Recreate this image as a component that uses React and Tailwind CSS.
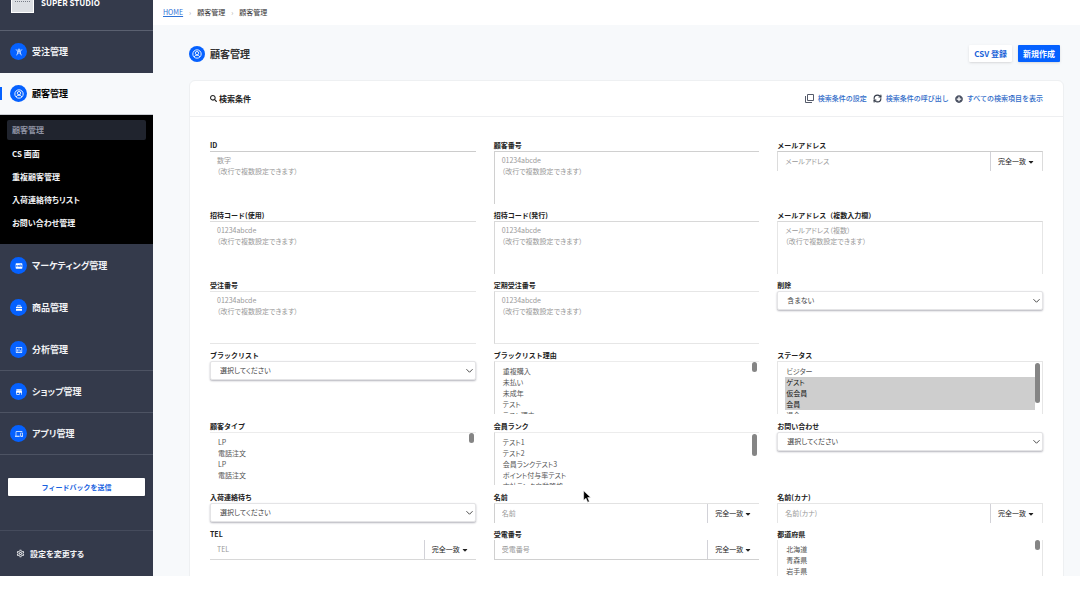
import React, { useId } from "react";
import { FaSearch, FaPlusCircle, FaCaretDown } from "react-icons/fa";
import { LuRefreshCw } from "react-icons/lu";
import {
  MdOutlineSettings,
  MdStore,
  MdDevices,
  MdInsertChartOutlined,
} from "react-icons/md";

function UserCircle({ className }) {
  return (
    <svg viewBox="0 0 24 24" className={className} fill="none" stroke="currentColor" strokeWidth="2.2" aria-hidden="true">
      <circle cx="12" cy="12" r="10" />
      <circle cx="12" cy="10" r="4" />
      <path d="M5.5 19c1-3 3.500-4 6.500-4s5.500 1 6.500 4" />
    </svg>
  );
}

function OrderIcon({ className }) {
  return (
    <svg viewBox="0 0 24 24" className={className} fill="none" stroke="currentColor" strokeWidth="2.200" aria-hidden="true">
      <circle cx="12" cy="6" r="3" />
      <path d="M3 4l5 6h8l5-6M8 10v5l-3 7M16 10v5l3 7M8 15h8" />
    </svg>
  );
}

function CampaignIcon({ className }) {
  return (
    <svg viewBox="0 0 24 24" className={className} aria-hidden="true">
      <rect x="2" y="4" width="20" height="16" rx="2" fill="currentColor" />
      <path d="M5 15V9l3 4 3-4v6M14 15V9h5v6M14 12h5" fill="none" stroke="#0b5fff" strokeWidth="2" />
    </svg>
  );
}

function ProductIcon({ className }) {
  return (
    <svg viewBox="0 0 24 24" className={className} fill="currentColor" aria-hidden="true">
      <path d="M8 8V4h8v4" fill="none" stroke="currentColor" strokeWidth="2" />
      <path d="M3 8h18v5H3zM3 15h18v5H3z" />
    </svg>
  );
}

function Badge({ icon: Icon, size = "size-[17px]", iconSize = "size-2" }) {
  return (
    <span className={`flex shrink-0 items-center justify-center rounded-full bg-[#0561ff] text-white ${size}`}>
      <Icon className={iconSize} />
    </span>
  );
}

function NavItem({ icon, label, border = "border-transparent" }) {
  return (
    <a
      href="#"
      className={`flex h-[42px] shrink-0 items-center gap-[5px] border-b pl-2.5 text-[9px] font-bold text-[#f2f3f5] ${border}`}
    >
      <Badge icon={icon} />
      {label}
    </a>
  );
}

const subItems = ["CS 画面", "重複顧客管理", "入荷連絡待ちリスト", "お問い合わせ管理"];

function Sidebar() {
  return (
    <nav className="flex w-[153px] shrink-0 flex-col overflow-hidden bg-[#343a4b]">
      <div className="flex h-[31px] shrink-0 items-start gap-[7px] border-b border-[#5a6070] pl-[11px] text-[8px] leading-[6px] font-bold text-white">
        <span className="h-[13px] w-[23px] border border-t-0 border-white bg-[#dcdfe3] px-[3px]">
          <span className="block h-0.5 border-b border-dotted border-[#777c86]" />
        </span>
        SUPER STUDIO
      </div>
      <NavItem icon={OrderIcon} label="受注管理" />
      <a
        href="#"
        className="relative flex h-[42px] shrink-0 items-center gap-[5px] border-b border-[#c9ccd2] bg-[#f7f9fb] pl-2.5 text-[9px] font-bold text-black"
      >
        <span className="absolute left-0 h-[13px] w-0.5 bg-[#0561ff]" />
        <Badge icon={UserCircle} iconSize="size-2.5" />
        顧客管理
      </a>
      <div className="flex h-[129px] shrink-0 flex-col bg-black px-[7px] pt-[5px] text-[8px] font-bold text-[#f2f3f5]">
        <a href="#" className="flex h-5 items-center rounded-xs bg-[#20242e] px-[5px] text-[#8f93a3]">
          顧客管理
        </a>
        <div className="mt-0.5">
          {subItems.map((t) => (
            <a key={t} href="#" className="flex h-[23px] items-center px-[5px]">
              {t}
            </a>
          ))}
        </div>
      </div>
      <div className="shrink-0 pt-px">
        <NavItem icon={CampaignIcon} label="マーケティング管理" />
        <NavItem icon={ProductIcon} label="商品管理" />
        <NavItem icon={MdInsertChartOutlined} label="分析管理" border="border-[#4d5363]" />
        <NavItem icon={MdStore} label="ショップ管理" border="border-[#4d5363]" />
        <NavItem icon={MdDevices} label="アプリ管理" border="border-[#4d5363]" />
      </div>
      <div className="h-[76px] shrink-0 border-b border-[#454b5c] px-2 pt-[23px] [font-feature-settings:normal]">
        <button type="button" className="block h-[18px] w-full rounded-[1px] bg-white text-[7px] font-bold text-[#1862e0] shadow">
          フィードバックを送信
        </button>
      </div>
      <a href="#" className="flex h-[45px] shrink-0 items-center gap-[5px] pl-4 text-[8px] font-bold text-[#f2f3f5]">
        <MdOutlineSettings className="size-[9px]" />
        設定を変更する
      </a>
    </nav>
  );
}

function Field({ label, id, children }) {
  return (
    <div className="min-w-0">
      <label
        htmlFor={id}
        className="block h-[11px] text-[7px] leading-[11px] font-bold text-[#222] [font-feature-settings:normal]"
      >
        {label}
      </label>
      {children}
    </div>
  );
}

function AreaField({ label, hint, edge }) {
  const id = useId();
  return (
    <Field label={label} id={id}>
      <textarea
        id={id}
        placeholder={`${hint}\n（改行で複数設定できます）`}
        className={`block h-[53px] w-full resize-none bg-white px-[7px] pt-[3px] text-[7px] leading-[11px] placeholder:text-[#999] ${edge}`}
      />
    </Field>
  );
}

function MatchField({ label, hint, edge }) {
  const id = useId();
  return (
    <Field label={label} id={id}>
      <div className={`flex h-5 ${edge}`}>
        <input id={id} type="text" placeholder={hint} className="min-w-0 flex-1 px-[7px] text-[7px] placeholder:text-[#999]" />
        <button type="button" className="flex w-[52px] items-center justify-center gap-px border-l border-[#d2d2d8] text-[7px] text-[#222]">
          完全一致
          <FaCaretDown className="size-2" />
        </button>
      </div>
    </Field>
  );
}

function ChoiceField({ label, value }) {
  const id = useId();
  return (
    <Field label={label} id={id}>
      <div className="grid h-[19px] items-center rounded-xs border border-[#e4e4e6] bg-white shadow-[0_1px_2px_#b4b4bc]">
        <select id={id} className="col-start-1 row-start-1 h-full w-full appearance-none bg-transparent px-[9px] pb-px text-[7px] text-[#444]">
          <option>{value}</option>
        </select>
        <svg viewBox="0 0 8 8" className="pointer-events-none col-start-1 row-start-1 mr-0.5 size-[7px] justify-self-end" fill="none" stroke="#333" aria-hidden="true">
          <path d="M0.500 2.500L4 6l3.500-3.500" />
        </svg>
      </div>
    </Field>
  );
}

function ListField({ label, options, selected = [], thumb, edge }) {
  const id = useId();
  return (
    <Field label={label} id={id}>
      <div className={`relative mb-px h-[53px] overflow-hidden ${edge}`}>
        <select
          id={id}
          multiple
          defaultValue={selected}
          className="block h-full w-full overflow-y-auto pt-1 pr-[7px] pl-[7px] text-[7px] text-[#555] [scrollbar-width:none]"
        >
          {options.map((o, i) => (
            <option key={i} value={o} className="h-[11px] min-h-[11px] px-px py-0 text-[7px] leading-[11px]">
              {o}
            </option>
          ))}
        </select>
        <span className={`pointer-events-none absolute right-0.5 w-[5px] rounded-full bg-[#858585] ${thumb}`} />
      </div>
    </Field>
  );
}

function SearchForm() {
  return (
    <form className="grid grid-cols-3 gap-x-[18px] gap-y-1.5 px-5 py-[23px]">
      <AreaField label="ID" hint="数字" edge="border-t border-[#ccc]" />
      <AreaField label="顧客番号" hint="01234abcde" edge="border-t border-l border-[#d0d0d0]" />
      <MatchField label="メールアドレス" hint="メールアドレス" edge="border-x border-t border-[#dcdcdc] border-t-[#ccc]" />

      <AreaField label="招待コード(使用)" hint="01234abcde" edge="border-t border-[#ddd]" />
      <AreaField label="招待コード(発行)" hint="01234abcde" edge="border-t border-l border-[#d8d8d8]" />
      <AreaField label="メールアドレス（複数入力欄）" hint="メールアドレス（複数）" edge="border-x border-t border-[#e6e6e6] border-t-[#d8d8d8]" />

      <AreaField label="受注番号" hint="01234abcde" edge="border-y border-[#e6e6e6]" />
      <AreaField label="定期受注番号" hint="01234abcde" edge="border-y border-l border-[#e6e6e6] border-l-[#d8d8d8]" />
      <ChoiceField label="削除" value="含まない" />

      <ChoiceField label="ブラックリスト" value="選択してください" />
      <ListField
        label="ブラックリスト理由"
        options={["重複購入", "未払い", "未成年", "テスト", "テスト理由"]}
        thumb="top-0 h-2.5"
        edge="border-t border-l border-[#ececec] border-l-[#d8d8d8]"
      />
      <ListField
        label="ステータス"
        options={["ビジター", "ゲスト", "仮会員", "会員", "退会"]}
        selected={["ゲスト", "仮会員", "会員"]}
        thumb="top-px h-10"
        edge="border-x border-t border-[#e6e6e6]"
      />

      <ListField
        label="顧客タイプ"
        options={["LP", "電話注文", "LP", "電話注文"]}
        thumb="top-0 h-2.5"
        edge="border-t border-[#ececec]"
      />
      <ListField
        label="会員ランク"
        options={["テスト1", "テスト2", "会員ランクテスト3", "ポイント付与率テスト", "本社ランク自動降格"]}
        thumb="top-px h-[22px]"
        edge="border-t border-l border-[#ececec] border-l-[#d8d8d8]"
      />
      <ChoiceField label="お問い合わせ" value="選択してください" />

      <ChoiceField label="入荷連絡待ち" value="選択してください" />
      <MatchField label="名前" hint="名前" edge="border-t border-l border-[#e2e2e2] border-l-[#d0d0d0]" />
      <MatchField label="名前(カナ)" hint="名前(カナ)" edge="border-x border-t border-[#e6e6e6]" />

      <MatchField label="TEL" hint="TEL" edge="border-b border-[#d8d8d8]" />
      <MatchField label="受電番号" hint="受電番号" edge="border-b border-l border-[#d0d0d0]" />
      <ListField
        label="都道府県"
        options={["北海道", "青森県", "岩手県", "宮城県"]}
        thumb="top-0 h-2.5"
        edge="border-x border-[#e6e6e6]"
      />
    </form>
  );
}

export default function App() {
  return (
    <div
      lang="ja"
      className="h-screen overflow-hidden bg-white pb-8 font-['Noto_Sans_CJK_JP',sans-serif] [font-feature-settings:'palt']"
    >
      <div className="flex h-full overflow-hidden">
        <Sidebar />
        <div className="flex min-w-0 flex-1 flex-col bg-[#f7f9fb]">
          <header className="flex h-[25px] shrink-0 items-center gap-1.5 bg-white pb-px pl-2.5 text-[7px] text-[#333]">
            <a href="#" className="text-[#2f72d6] underline">HOME</a>
            <span className="text-[#aaa]">›</span>
            <span>顧客管理</span>
            <span className="text-[#aaa]">›</span>
            <span>顧客管理</span>
          </header>
          <main className="min-h-0 flex-1 overflow-hidden pr-4 pl-9">
            <div className="flex h-[55px] items-center gap-[5px] pt-0.5">
              <Badge icon={UserCircle} iconSize="size-2.5" size="size-4" />
              <h1 className="flex-1 text-[10px] font-bold text-[#333]">顧客管理</h1>
              <div className="flex gap-1.5 pr-1 text-[8px] font-bold">
                <button type="button" className="h-[17px] rounded-[1px] bg-white px-[5px] text-[#1862d8] shadow-sm">CSV 登録</button>
                <button type="button" className="h-[17px] rounded-[1px] bg-[#0561ff] px-[5px] text-white shadow-sm">新規作成</button>
              </div>
            </div>
            <section className="rounded-md border border-[#eef0f2] bg-white">
              <div className="flex h-9 items-center justify-between border-b border-[#eeeff1] px-5">
                <h2 className="flex items-center gap-0.5 text-[8px] font-bold text-[#222]">
                  <FaSearch className="size-[7px]" />
                  検索条件
                </h2>
                <div className="flex items-center gap-1.5 text-[7px] font-medium text-[#2f6bc8] [font-feature-settings:normal]">
                  <a href="#" className="flex items-center gap-1">
                    <svg viewBox="0 0 18 18" className="size-[9px]" fill="none" stroke="#555b6a" strokeWidth="2" aria-hidden="true">
                      <path d="M5 1h12v12H5zM1 4v13h13" />
                    </svg>
                    検索条件の設定
                  </a>
                  <a href="#" className="flex items-center gap-1">
                    <LuRefreshCw className="size-[9px] stroke-3 text-[#333a48]" />
                    検索条件の呼び出し
                  </a>
                  <a href="#" className="flex items-center gap-1">
                    <FaPlusCircle className="size-2 text-[#4a5162]" />
                    すべての検索項目を表示
                  </a>
                </div>
              </div>
              <SearchForm />
            </section>
          </main>
        </div>
      </div>
      <svg viewBox="0 0 12 19" className="pointer-events-none absolute top-[490px] left-[583px] h-[13px] w-2" aria-hidden="true">
        <path d="M1 1v14l3.500-3 2.500 6 2.500-1-2.500-6h4.500z" fill="#000" stroke="#fff" strokeWidth="0.800" />
      </svg>
    </div>
  );
}
